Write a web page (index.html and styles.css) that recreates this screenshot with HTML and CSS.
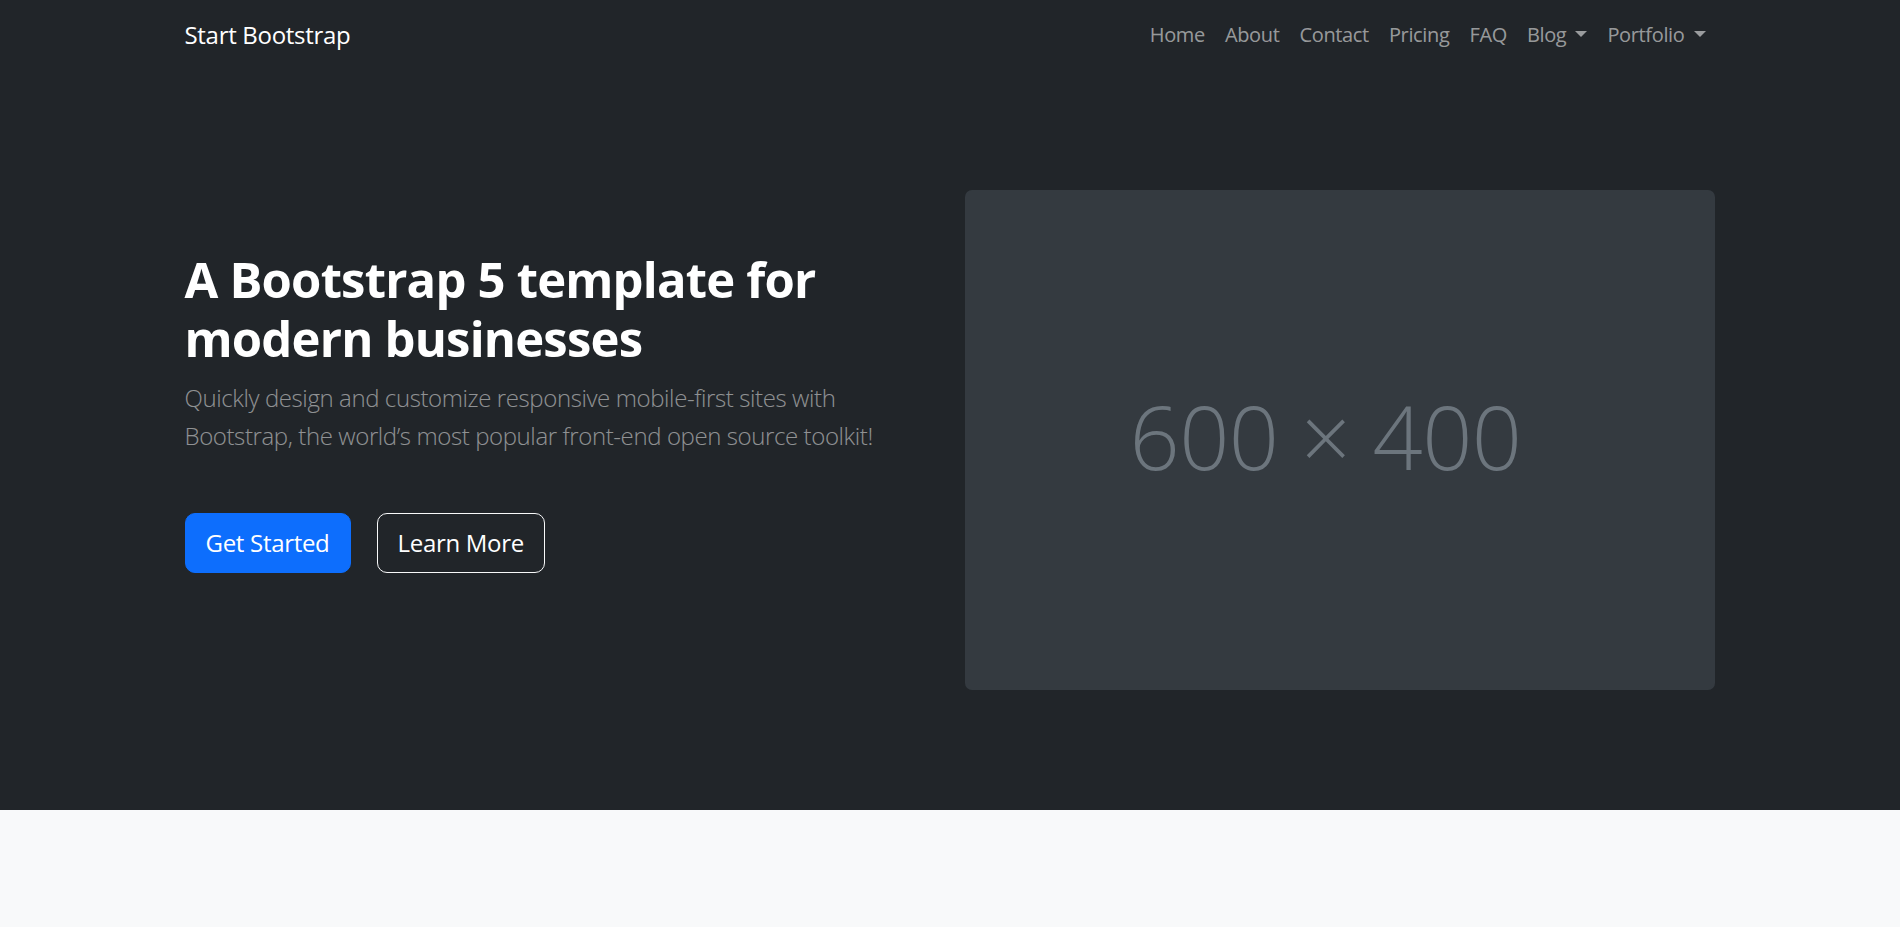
FILE: index.html
```html
<!DOCTYPE html>
<html lang="en">
<head>
<meta charset="utf-8">
<title>Modern Business - Start Bootstrap Template</title>
<link rel="stylesheet" href="styles.css">
</head>
<body>
<nav class="navbar">
  <div class="container navbar-inner">
    <a class="brand" href="#">Start Bootstrap</a>
    <ul class="nav-links">
      <li><a class="nav-link" href="#">Home</a></li>
      <li><a class="nav-link" href="#">About</a></li>
      <li><a class="nav-link" href="#">Contact</a></li>
      <li><a class="nav-link" href="#">Pricing</a></li>
      <li><a class="nav-link" href="#">FAQ</a></li>
      <li><a class="nav-link dropdown-toggle" href="#">Blog</a></li>
      <li><a class="nav-link dropdown-toggle" href="#">Portfolio</a></li>
    </ul>
  </div>
</nav>
<header class="hero">
  <div class="container hero-row">
    <div class="hero-text">
      <h1 class="hero-title">A Bootstrap 5 template for modern businesses</h1>
      <p class="lead">Quickly design and customize responsive mobile-first sites with Bootstrap, the world’s most popular front-end open source toolkit!</p>
      <div class="actions">
        <a class="btn btn-primary" href="#">Get Started</a>
        <a class="btn btn-outline" href="#">Learn More</a>
      </div>
    </div>
    <div class="hero-media">
      <div class="placeholder">600 × 400</div>
    </div>
  </div>
</header>
<section class="light-section"></section>
</body>
</html>
```
FILE: styles.css
```css
* { box-sizing: border-box; }
html, body { margin: 0; padding: 0; }
body {
  font-family: "Open Sans", "Noto Sans", "Liberation Sans", sans-serif;
  background: #f8f9fa;
  color: #212529;
}
a { text-decoration: none; }

.container {
  width: 1531px;
  margin: 0 auto;
}

/* navbar */
.navbar { background: #212529; }
.navbar-inner {
  height: 70px;
  display: flex;
  align-items: center;
  justify-content: space-between;
}
.brand {
  color: #fff;
  font-size: 24px;
  letter-spacing: -0.3px;
  line-height: 36px;
}
.nav-links {
  list-style: none;
  margin: 0;
  padding: 0;
  display: flex;
}
.nav-link {
  display: block;
  padding: 10px 10px;
  font-size: 20px;
  letter-spacing: -0.35px;
  line-height: 30px;
  color: rgba(255, 255, 255, 0.55);
}
.dropdown-toggle::after {
  content: "";
  display: inline-block;
  margin-left: 0.45em;
  vertical-align: 0.255em;
  border-top: 0.32em solid;
  border-right: 0.32em solid transparent;
  border-left: 0.32em solid transparent;
}

/* hero */
.hero {
  background: #212529;
  padding: 60px 0;
}
.hero-row {
  display: flex;
  align-items: center;
}
.hero-text {
  width: 735px;
  padding-bottom: 57px;
}
.hero-title {
  margin: 0 0 11px;
  color: #fff;
  font-size: 49px;
  font-weight: 700;
  line-height: 59px;
  letter-spacing: -0.8px;
}
.lead {
  margin: 0 0 59px;
  font-size: 24px;
  font-weight: 300;
  line-height: 37.5px;
  letter-spacing: -0.4px;
  color: rgba(255, 255, 255, 0.5);
}
.actions {
  display: flex;
  gap: 26px;
}
.btn {
  display: inline-block;
  height: 60px;
  padding: 0 20px;
  border-radius: 10px;
  border: 1.25px solid transparent;
  font-size: 24px;
  line-height: 57px;
  letter-spacing: -0.3px;
  color: #fff;
}
.btn-primary {
  background: #0d6efd;
  border-color: #0d6efd;
}
.btn-outline {
  border-color: #f8f9fa;
}

.hero-media {
  flex: 1;
  display: flex;
  justify-content: flex-end;
}
.placeholder {
  width: 750px;
  height: 500px;
  margin: 60px 1px 60px 0;
  border-radius: 7px;
  background: #343a40;
  color: #6c757d;
  display: flex;
  align-items: center;
  justify-content: center;
  padding: 0 28px 8px 0;
  font-size: 88px;
  font-weight: 300;
  letter-spacing: -0.6px;
}

.light-section {
  background: #f8f9fa;
  min-height: 118px;
}
```
